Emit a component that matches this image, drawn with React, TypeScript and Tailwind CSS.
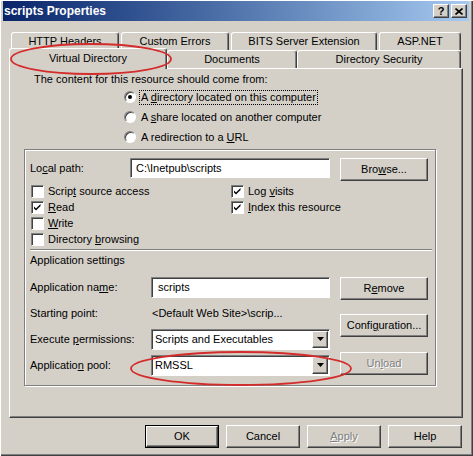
import type { ReactNode } from "react";

const raised =
  "border border-t-white border-l-white border-r-[#404040] border-b-[#404040] shadow-[inset_-1px_-1px_#808080]";
const sunken =
  "border border-t-[#808080] border-l-[#808080] border-r-white border-b-white shadow-[inset_1px_1px_#404040]";
const tab =
  "relative flex items-center justify-center rounded-t-[3px] border-t border-l border-r border-t-white border-l-white border-r-[#404040] shadow-[inset_-1px_0_#808080] bg-[#D4D0C8]";

function U({ children }: { children: ReactNode }) {
  return <span className="underline underline-offset-[1px]">{children}</span>;
}

function Btn({
  children,
  disabled,
  className = "w-[88px]",
}: {
  children: ReactNode;
  disabled?: boolean;
  className?: string;
}) {
  return (
    <div
      className={`${raised} ${className} flex h-[23px] items-center justify-center bg-[#D4D0C8] ${
        disabled ? "text-[#808080] [text-shadow:1px_1px_#fff]" : ""
      }`}
    >
      {children}
    </div>
  );
}

function Radio({ checked, children }: { checked?: boolean; children: ReactNode }) {
  return (
    <div className="flex h-[20px] items-center gap-[5px]">
      <div className="flex h-[12px] w-[12px] items-center justify-center rounded-full border border-t-[#808080] border-l-[#808080] border-r-white border-b-white bg-white shadow-[inset_1px_1px_#404040]">
        {checked && <div className="h-[4px] w-[4px] rounded-full bg-black" />}
      </div>
      {children}
    </div>
  );
}

function Check({ checked, children }: { checked?: boolean; children: ReactNode }) {
  return (
    <div className="flex h-[16px] items-center gap-[4px]">
      <div className={`${sunken} h-[13px] w-[13px] bg-white`}>
        {checked && (
          <svg width="11" height="11" viewBox="0 0 11 11" className="block">
            <path d="M2 4.5L4 6.5L8.5 2V4L4 8.5L2 6.5Z" fill="#000" />
          </svg>
        )}
      </div>
      <span>{children}</span>
    </div>
  );
}

function Select({ value }: { value: string }) {
  return (
    <div className={`${sunken} flex h-[21px] w-[179px] items-center bg-white`}>
      <span className="flex-1 pl-[3px]">{value}</span>
      <div className={`${raised} mr-[1px] flex h-[17px] w-[16px] items-center justify-center bg-[#D4D0C8]`}>
        <svg width="7" height="4" viewBox="0 0 7 4" className="block">
          <path d="M0 0H7L3.5 4Z" fill="#000" />
        </svg>
      </div>
    </div>
  );
}

function Row({ label, children }: { label: ReactNode; children: ReactNode }) {
  return (
    <div className="flex h-[26px] items-center">
      <div className="w-[121px]">{label}</div>
      {children}
    </div>
  );
}

export default function App() {
  return (
    <div className="relative h-[456px] w-[473px] overflow-hidden bg-[#D4D0C8] pl-[3px] pt-[1px] font-['Liberation_Sans',Arial,sans-serif] text-[11px] leading-[13px] text-black shadow-[inset_1px_1px_#fff,inset_-1px_-1px_#404040,inset_-2px_-2px_#808080]">
      {/* title bar */}
      <div className="flex h-[20px] w-[466px] items-center justify-between bg-gradient-to-r from-[#0A246A] to-[#A6CAF0] pl-[1px] pr-[2px]">
        <span className="text-[12px] font-bold text-white">scripts Properties</span>
        <div className="flex gap-[2px]">
          <div className={`${raised} flex h-[14px] w-[16px] items-center justify-center bg-[#D4D0C8] text-[11px] font-bold`}>
            ?
          </div>
          <div className={`${raised} flex h-[14px] w-[16px] items-center justify-center bg-[#D4D0C8]`}>
            <svg width="8" height="7" viewBox="0 0 8 7" className="block">
              <path d="M0.5 0.5L7.5 6.5M7.5 0.5L0.5 6.5" stroke="#000" strokeWidth="1.6" />
            </svg>
          </div>
        </div>
      </div>

      {/* back tab row */}
      <div className="ml-[8px] mt-[11px] flex h-[18px] gap-[2px]">
        <div className={`${tab} w-[108px]`}>HTTP Headers</div>
        <div className={`${tab} w-[108px]`}>Custom Errors</div>
        <div className={`${tab} w-[146px]`}>BITS Server Extension</div>
        <div className={`${tab} w-[82px]`}>ASP.NET</div>
      </div>

      {/* front tab row */}
      <div className="relative z-10 ml-[6px] flex h-[18px] items-end">
        <div className={`${tab} -mb-[1px] h-[21px] w-[158px] pb-[2px]`}>Virtual Directory</div>
        <div className={`${tab} h-[18px] w-[130px]`}>Documents</div>
        <div className={`${tab} h-[18px] w-[164px]`}>Directory Security</div>
      </div>

      {/* tab panel */}
      <div className="ml-[6px] flex h-[350px] w-[454px] flex-col border border-t-white border-l-white border-r-[#404040] border-b-[#404040] shadow-[inset_-1px_-1px_#808080]">
        <div className="ml-[24px] mt-[4px]">The content for this resource should come from:</div>
        <div className="ml-[114px] mt-[1px] flex flex-col">
          <Radio checked>
            <span className="-ml-[2px] border border-dotted border-black px-[1px]">
              A <U>d</U>irectory located on this computer
            </span>
          </Radio>
          <Radio>
            <span>
              A <U>s</U>hare located on another computer
            </span>
          </Radio>
          <Radio>
            <span>
              A redirection to a <U>U</U>RL
            </span>
          </Radio>
        </div>

        {/* group box */}
        <div className="ml-[14px] mt-[2px] flex h-[237px] w-[412px] flex-col border border-[#808080] shadow-[inset_1px_1px_#fff,1px_1px_#fff]">
          <div className="mt-[8px] flex pl-[5px]">
            <div className="flex h-[20px] w-[100px] items-center">
              <span>
                Lo<U>c</U>al path:
              </span>
            </div>
            <div className={`${sunken} flex h-[20px] w-[200px] items-center bg-white pl-[5px]`}>
              C:\Inetpub\scripts
            </div>
            <Btn className="ml-[10px] w-[88px]">
              Bro<U>w</U>se...
            </Btn>
          </div>

          <div className="mt-[2px] flex pl-[6px]">
            <div className="flex w-[200px] flex-col">
              <Check>
                Scrip<U>t</U> source access
              </Check>
              <Check checked>
                <U>R</U>ead
              </Check>
              <Check>
                <U>W</U>rite
              </Check>
              <Check>
                Directory <U>b</U>rowsing
              </Check>
            </div>
            <div className="flex flex-col">
              <Check checked>
                Log <U>v</U>isits
              </Check>
              <Check checked>
                <U>I</U>ndex this resource
              </Check>
            </div>
          </div>

          <div className="ml-[5px] mt-[2px] h-[2px] w-[402px] border-t border-b border-t-[#808080] border-b-white" />

          <div className="mt-[3px] pl-[5px]">Application settings</div>

          <div className="mt-[7px] flex pl-[5px]">
            <div className="flex w-[300px] flex-col">
              <Row
                label={
                  <span>
                    Application na<U>m</U>e:
                  </span>
                }
              >
                <div className={`${sunken} flex h-[21px] w-[179px] items-center bg-white pl-[6px]`}>scripts</div>
              </Row>
              <Row label="Starting point:">
                <span className="ml-[1px]">&lt;Default Web Site&gt;\scrip...</span>
              </Row>
              <Row
                label={
                  <span>
                    Execute <U>p</U>ermissions:
                  </span>
                }
              >
                <Select value="Scripts and Executables" />
              </Row>
              <Row
                label={
                  <span>
                    Applicatio<U>n</U> pool:
                  </span>
                }
              >
                <Select value="RMSSL" />
              </Row>
            </div>
            <div className="ml-[10px] flex flex-col">
              <Btn className="mt-[3px] w-[88px]">
                R<U>e</U>move
              </Btn>
              <Btn className="mt-[14px] w-[88px]">
                Confi<U>g</U>uration...
              </Btn>
              <Btn className="mt-[15px] w-[88px]" disabled>
                Un<U>l</U>oad
              </Btn>
            </div>
          </div>
        </div>
      </div>

      {/* dialog buttons */}
      <div className="ml-[142px] mt-[7px] flex gap-[7px]">
        <div className="h-[23px] w-[74px] border border-black">
          <div className={`${raised} flex h-full w-full items-center justify-center bg-[#D4D0C8]`}>OK</div>
        </div>
        <Btn className="w-[74px]">Cancel</Btn>
        <Btn className="w-[74px]" disabled>
          <U>A</U>pply
        </Btn>
        <Btn className="w-[74px]">Help</Btn>
      </div>

      {/* red annotation ellipses */}
      <svg className="pointer-events-none absolute left-[9px] top-[42px] z-20" width="164" height="34" viewBox="0 0 164 34">
        <ellipse cx="82" cy="17" rx="80" ry="15" fill="none" stroke="#D42B2B" strokeWidth="1.8" />
      </svg>
      <svg className="pointer-events-none absolute left-[129px] top-[350px] z-20" width="224" height="37" viewBox="0 0 224 37">
        <ellipse cx="112" cy="18.5" rx="110" ry="16.5" fill="none" stroke="#D42B2B" strokeWidth="1.8" />
      </svg>
    </div>
  );
}
